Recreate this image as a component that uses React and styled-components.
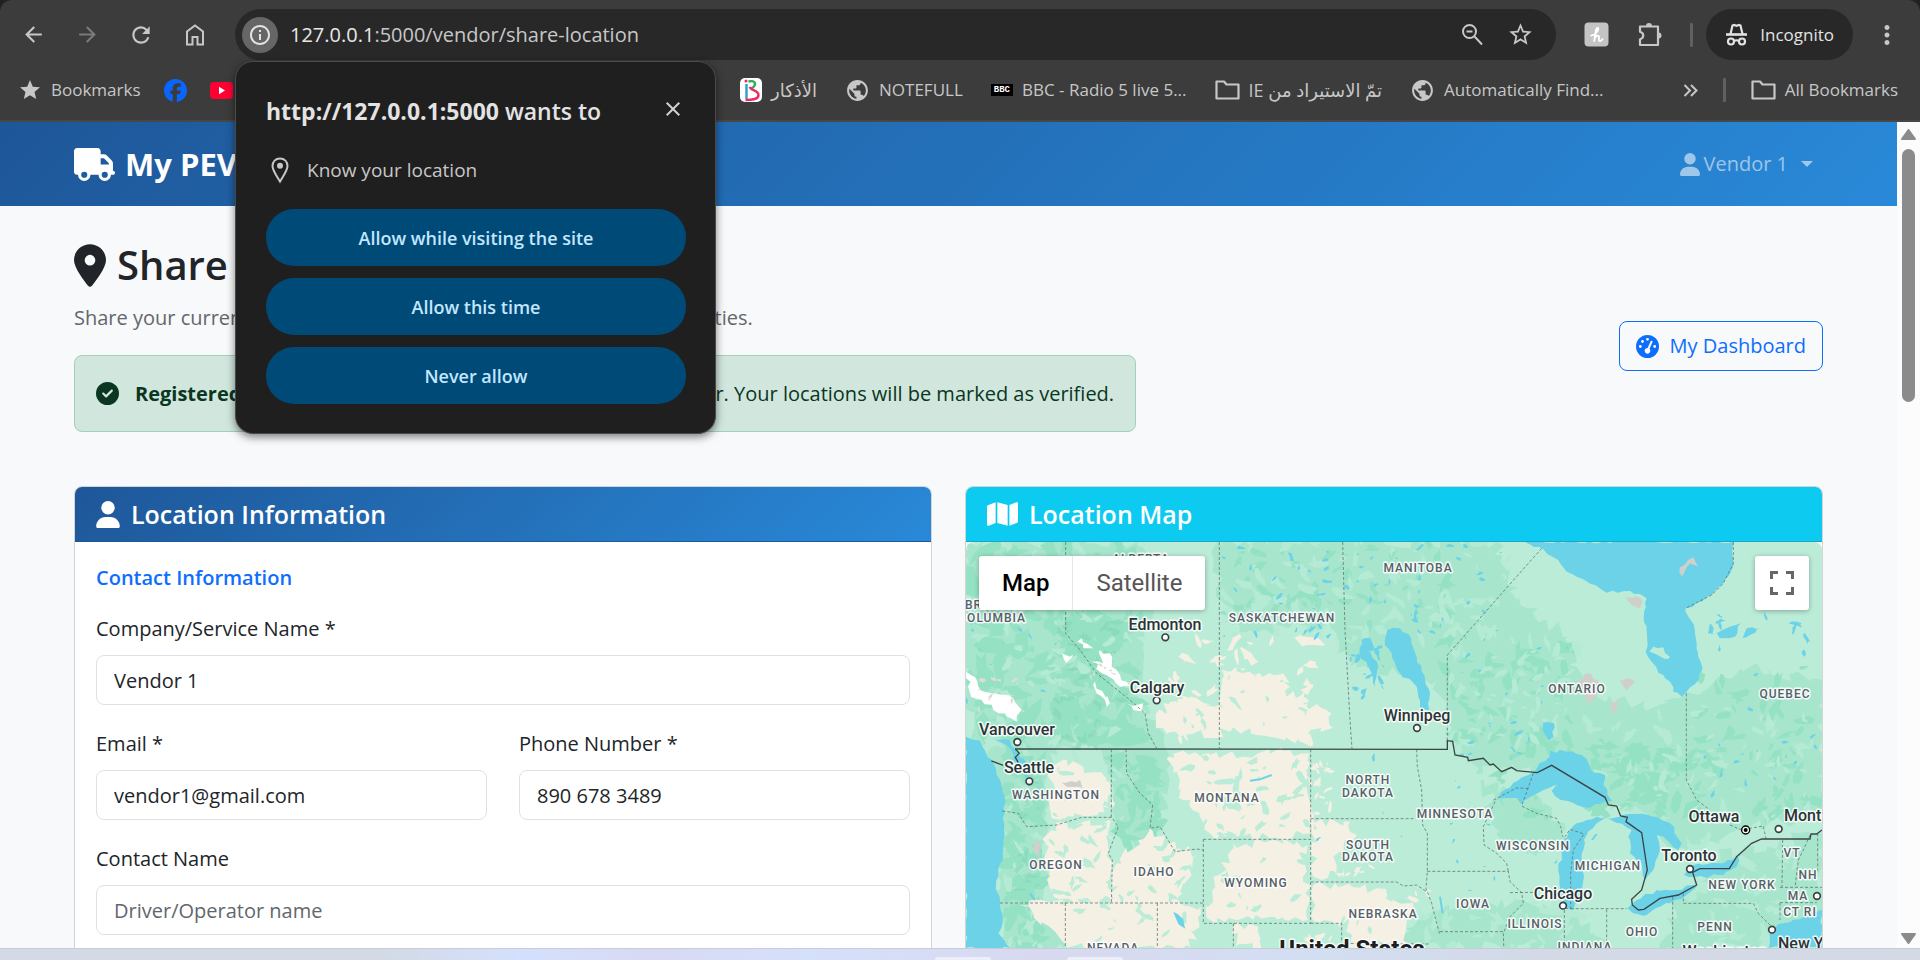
import React from "react";
import styled, { createGlobalStyle, css } from "styled-components";
import {
  FaTruck,
  FaUser,
  FaLocationDot,
  FaCircleCheck,
  FaMap,
  FaGaugeHigh,
  FaFacebook,
} from "react-icons/fa6";
import {
  MdArrowBack,
  MdArrowForward,
  MdRefresh,
  MdInfoOutline,
  MdStarBorder,
  MdStar,
  MdMoreVert,
  MdPublic,
  MdClose,
} from "react-icons/md";

const GlobalStyle = createGlobalStyle`
  *, *::before, *::after { box-sizing: border-box; }
  body {
    margin: 0;
    background: #202124;
    font-family: "Open Sans", "Noto Sans", "DejaVu Sans", sans-serif;
    font-size: 20px;
    line-height: 30px;
    color: #212529;
  }
  button, input { font: inherit; color: inherit; }
  svg { display: block; flex: none; }
`;

const BLUE = "linear-gradient(135deg, #1e5799 0%, #2989d8 100%)";

/* ---------- browser shell ---------- */

const Screen = styled.div`
  position: relative;
  display: flex;
  flex-direction: column;
  height: 100vh;
  overflow: hidden;
`;

const BrowserBar = styled.header`
  background: #3c3c3c;
  border-radius: 12px 12px 0 0;
  border-bottom: 2px solid #474747;
  color: #c7c7c7;
`;

const Toolbar = styled.div`
  display: flex;
  align-items: center;
  height: 60px;
  padding: 9px 6px 0;
`;

const IconButton = styled.button`
  display: flex;
  align-items: center;
  justify-content: center;
  width: 54px;
  height: 51px;
  padding: 0;
  border: 0;
  background: none;
  color: ${(p) => (p.$dim ? "#7b7b7b" : "#c7c7c7")};
`;

const AddressBar = styled.div`
  display: flex;
  flex: 1;
  align-items: center;
  height: 51px;
  margin: 0 13px;
  padding: 0 12px 0 7px;
  border-radius: 26px;
  background: #282828;
`;

const SiteInfo = styled.button`
  display: flex;
  align-items: center;
  justify-content: center;
  width: 36px;
  height: 36px;
  margin-right: 12px;
  padding: 0;
  border: 0;
  border-radius: 50%;
  background: #666;
  color: #e3e3e3;
`;

const Url = styled.div`
  flex: 1;
  color: #c7c7c7;
  span { color: #e8e8e8; }
`;

const AddressAction = styled(IconButton)`
  width: 48px;
`;

const Divider = styled.span`
  width: 3px;
  height: 24px;
  margin: 0 ${(p) => p.$gap || 13}px;
  border-radius: 1px;
  background: #606060;
`;

const Incognito = styled.button`
  display: flex;
  align-items: center;
  gap: 12px;
  height: 51px;
  margin-right: 7px;
  padding: 0 19px;
  border: 0;
  border-radius: 26px;
  background: #282828;
  color: #e3e3e3;
  font-size: 17px;
`;

const BookmarksBar = styled.nav`
  display: flex;
  align-items: center;
  height: 60px;
  padding: 0 22px 0 18px;
  font-size: 17px;
  white-space: nowrap;
`;

const BookmarkGroup = styled.div`
  display: flex;
  align-items: center;
  gap: ${(p) => p.$gap || 28}px;
  ${(p) => p.$first && css`width: 722px;`}
  ${(p) => p.$last && css`margin-left: auto; gap: 0;`}
`;

const Bookmark = styled.a`
  display: flex;
  align-items: center;
  gap: 9px;
  color: #c7c7c7;
  text-decoration: none;
  [dir="rtl"] { font-size: 18px; }
`;

const BbcMark = styled.span`
  padding: 0 3px;
  background: #000;
  color: #fff;
  font: bold 9px/12px "Liberation Mono", monospace;
`;

/* ---------- permission prompt ---------- */

const Prompt = styled.section`
  position: absolute;
  top: 61px;
  left: 235px;
  width: 481px;
  padding: 32px 29px 29px 30px;
  border: 1px solid #4a4a4a;
  border-radius: 18px;
  background: #1f1f1f;
  box-shadow: 0 3px 8px rgba(0, 0, 0, 0.5);
  color: #c7c7c7;
`;

const PromptHeader = styled.div`
  display: flex;
  justify-content: space-between;
  align-items: flex-start;
`;

const PromptTitle = styled.h2`
  margin: 0;
  font-size: 23px;
  line-height: 34px;
  font-weight: 600;
  color: #e3e3e3;
  strong { font-weight: 700; }
`;

const CloseButton = styled.button`
  display: flex;
  padding: 3px 1px;
  border: 0;
  background: none;
  color: #d0d0d0;
`;

const PromptRow = styled.div`
  display: flex;
  align-items: center;
  gap: 15px;
  padding: 27px 0 24px 2px;
  font-size: 19px;
`;

const PromptActions = styled.div`
  display: grid;
  gap: 12px;
`;

const PromptButton = styled.button`
  height: 57px;
  border: 0;
  border-radius: 28px;
  background: #004a77;
  color: #c2e7ff;
  font-size: 18px;
  font-weight: 600;
`;

/* ---------- web page ---------- */

const Viewport = styled.div`
  display: flex;
  flex: 1;
  min-height: 0;
`;

const Page = styled.div`
  flex: 1;
  min-width: 0;
  overflow: hidden;
  background: #f8f9fb;
`;

const Navbar = styled.nav`
  display: flex;
  align-items: center;
  justify-content: space-between;
  height: 84px;
  padding: 0 84px 0 74px;
  background: ${BLUE};
`;

const Brand = styled.a`
  display: flex;
  align-items: center;
  gap: 10px;
  color: #fff;
  font-size: 31px;
  font-weight: 700;
  text-decoration: none;
  svg { width: 41px; }
`;

const UserMenu = styled.button`
  display: flex;
  align-items: center;
  gap: 4px;
  padding: 0;
  border: 0;
  background: none;
  color: rgba(255, 255, 255, 0.55);
  font-size: 20px;
  svg { width: 20px; }
  &::after {
    content: "";
    margin-left: 9px;
    border: 6px solid transparent;
    border-top-color: currentColor;
    border-bottom: 0;
  }
`;

const Main = styled.main`
  padding: 30px 74px 0;
`;

const PageHeader = styled.div`
  display: flex;
  align-items: center;
  justify-content: space-between;
  margin-bottom: 30px;
`;

const Title = styled.h1`
  display: flex;
  align-items: center;
  gap: 11px;
  margin: 0 0 9px;
  font-size: 40px;
  line-height: 58px;
  font-weight: 600;
  svg { width: 32px; }
`;

const Lead = styled.p`
  margin: 0 0 22px;
  color: #62676c;
`;

const Notice = styled.div`
  display: flex;
  align-items: center;
  gap: 16px;
  height: 77px;
  margin-bottom: 24px;
  padding: 0 21px;
  border: 1px solid #a3cfbb;
  border-radius: 8px;
  background: #d1e7dd;
  color: #0a3622;
  white-space: nowrap;
`;

const DashboardLink = styled.a`
  display: flex;
  align-items: center;
  gap: 11px;
  padding: 9px 16px;
  border: 1px solid #0d6efd;
  border-radius: 8px;
  color: #0d6efd;
  text-decoration: none;
`;

const Columns = styled.div`
  display: grid;
  grid-template-columns: 1fr 1fr;
  gap: 33px;
`;

const Card = styled.section`
  overflow: hidden;
  min-width: 0;
  border: 1px solid #d3d4d6;
  border-radius: 8px;
  background: #fff;
`;

const CardHeader = styled.h2`
  display: flex;
  align-items: center;
  gap: 11px;
  height: 55px;
  margin: 0;
  padding: 0 21px;
  border-bottom: 1px solid ${(p) => (p.$info ? "#1aa6c4" : "#1b5a9b")};
  background: ${(p) => (p.$info ? "#0dcaf0" : BLUE)};
  color: #fff;
  font-size: 25px;
  font-weight: 600;
  svg { width: ${(p) => (p.$info ? 31 : 24)}px; }
`;

const Form = styled.form`
  display: grid;
  grid-template-columns: 1fr 1fr;
  column-gap: 32px;
  row-gap: 24px;
  padding: 21px 21px 80px;
`;

const SectionTitle = styled.h3`
  grid-column: 1 / -1;
  margin: 0 0 -3px;
  font-size: 20px;
  line-height: 30px;
  font-weight: 600;
  color: #0d6efd;
`;

const Field = styled.div`
  ${(p) => p.$wide && css`grid-column: 1 / -1;`}
  label { display: block; margin-bottom: 11px; }
`;

const TextInput = styled.input`
  display: block;
  width: 100%;
  height: 50px;
  padding: 0 17px;
  border: 1px solid #dee2e6;
  border-radius: 8px;
  background: #fff;
  outline: none;
  &::placeholder { color: #62676c; opacity: 1; }
`;

const ScrollTrack = styled.div`
  display: flex;
  flex-direction: column;
  align-items: center;
  justify-content: space-between;
  width: 23px;
  padding: 7px 0 4px;
  background: #fcfcfc;
`;

const ScrollTop = styled.div`
  display: grid;
  justify-items: center;
  gap: 9px;
`;

const ScrollThumb = styled.div`
  width: 13px;
  height: 253px;
  border-radius: 7px;
  background: #8b8b8b;
`;

const Taskbar = styled.footer`
  display: flex;
  justify-content: center;
  align-items: flex-end;
  gap: 76px;
  height: 12px;
  padding-left: 138px;
  border-top: 1px solid #c5ccda;
  background: linear-gradient(90deg, #d3dae6 0%, #d3dae6 20%, #d4e0fc 27%, #d8d9f4 34%, #d5e0fb 42%, #d8d9ef 54%, #d3def2 68%, #d3dae6 80%);
`;

const TaskTab = styled.span`
  width: 56px;
  height: 3px;
  border-radius: 3px 3px 0 0;
  background: #eceffa;
`;

/* ---------- map ---------- */

const MapFrame = styled.div`
  position: relative;
  overflow: hidden;
  border-radius: 8px 8px 0 0;
`;

const MapType = styled.div`
  position: absolute;
  top: 14px;
  left: 13px;
  display: flex;
  border-radius: 3px;
  background: #fff;
  box-shadow: 0 1px 5px rgba(0, 0, 0, 0.3);
  font-family: Roboto, sans-serif;
`;

const MapTypeButton = styled.button`
  height: 54px;
  padding: 0 23px;
  border: 0;
  background: none;
  color: ${(p) => (p.$active ? "#000" : "#565656")};
  font-size: 24px;
  font-weight: ${(p) => (p.$active ? 500 : 400)};
  & + & { border-left: 1px solid #e6e6e6; }
`;

const Fullscreen = styled.button`
  position: absolute;
  top: 14px;
  right: 13px;
  display: grid;
  place-items: center;
  width: 54px;
  height: 54px;
  padding: 0;
  border: 0;
  border-radius: 3px;
  background: #fff;
  box-shadow: 0 1px 5px rgba(0, 0, 0, 0.3);
  color: #666;
`;

const MapSvg = styled.svg`
  width: 100%;
  background: #bbecd8;
  text {
    font-family: Roboto, sans-serif;
    font-weight: 500;
    paint-order: stroke;
    stroke: #fff;
    stroke-width: 3px;
    stroke-linejoin: round;
    stroke-opacity: 0.85;
  }
  .city { font-size: 16px; fill: #2d3436; }
  .state { font-size: 12px; letter-spacing: 1px; fill: #566066; }
  .country { font-size: 24px; font-weight: 700; fill: #1c2022; }
`;

const random = (seed) => () => {
  seed = (seed * 1664525 + 1013904223) >>> 0;
  return seed / 4294967296;
};

const toPoints = (s) => s.trim().split(/\s+/).map((p) => p.split(",").map(Number));

/* Splits every edge and shifts the new points, so that an outline looks natural. */
const rough = (s, amount = 14, seed = 7) => {
  const rnd = random(seed);
  const pts = toPoints(s);
  let d = "";
  pts.forEach(([x, y], i) => {
    const [nx, ny] = pts[(i + 1) % pts.length];
    const n = Math.max(1, Math.round(Math.hypot(nx - x, ny - y) / 16));
    for (let k = 0; k < n; k++) {
      const j = k === 0 ? 0 : amount;
      const px = x + ((nx - x) * k) / n + (rnd() - 0.5) * j * 2;
      const py = y + ((ny - y) * k) / n + (rnd() - 0.5) * j * 2;
      d += `${d ? "L" : "M"}${Math.round(px)} ${Math.round(py)}`;
    }
  });
  return d + "Z";
};

/* Scatters count angular patches over the box x, y, w, h. */
const scatter = (boxes, seed) => {
  const rnd = random(seed);
  let d = "";
  boxes.forEach(([x, y, w, h, count, size]) => {
    for (let i = 0; i < count; i++) {
      const cx = x + rnd() * w;
      const cy = y + rnd() * h;
      const r = size * (0.35 + rnd() * 0.9);
      const tilt = rnd() * Math.PI;
      const n = 7 + Math.floor(rnd() * 4);
      for (let k = 0; k < n; k++) {
        const a = (k / n) * Math.PI * 2;
        const q = r * (0.35 + rnd() * 0.9);
        const ex = Math.cos(a) * q * 1.5;
        const ey = Math.sin(a) * q * 0.6;
        const px = cx + ex * Math.cos(tilt) - ey * Math.sin(tilt);
        const py = cy + ex * Math.sin(tilt) + ey * Math.cos(tilt);
        d += `${k ? "L" : "M"}${Math.round(px)} ${Math.round(py)}`;
      }
      d += "Z";
    }
  });
  return d;
};

const WOODLAND = [
  "48,186 340,186 560,186 640,330 600,420 560,470 590,560 560,640 640,760 660,900 610,1060 560,1130 510,1040 480,900 440,800 300,820 290,1060 280,1260 340,1404 150,1404 140,1230 165,1100 165,960 60,780 48,600",
  "800,186 1180,186 1500,186 1640,186 1700,360 1860,470 1880,560 1940,640 2080,680 2200,640 2400,560 2616,600 2616,1010 2400,1040 2200,1120 2040,1000 1900,960 1740,860 1600,880 1500,780 1460,600 1200,560 1140,440 900,450 820,420",
  "1600,900 1800,980 1850,1100 1760,1130 1640,1060",
  "2280,1130 2616,1060 2616,1300 2400,1404 2130,1404 2180,1260 2240,1220",
  "1300,1404 1420,1300 1720,1260 1880,1300 1960,1404",
];

const PRAIRIE = [
  "815,570 860,560 900,575 940,590 1000,580 1020,620 1010,650 1055,645 1070,595 1085,620 1060,665 1130,690 1150,745 1060,755 1090,790 960,770 900,745 840,755 690,770 620,745 640,670 690,645 740,655 795,680 812,640",
  "655,830 700,812 780,825 880,830 1000,812 1078,820 1080,1060 960,1075 900,1060 860,1070 780,1060 750,1000 700,960 690,900",
  "300,850 350,840 400,860 470,910 478,1000 400,1008 330,1020 300,990 310,910",
  "290,1045 400,1025 480,1020 476,1110 482,1265 330,1262 290,1200",
  "500,1150 600,1045 660,1090 740,1125 700,1210 690,1269 752,1280 720,1404 350,1404 300,1340 210,1275 490,1255",
  "850,1090 1040,1085 1070,1120 1075,1320 960,1310 800,1330 768,1300 790,1190 840,1150",
  "1090,1030 1200,1025 1220,1065 1150,1130 1180,1180 1090,1190",
  "1090,1215 1280,1225 1390,1290 1370,1390 1200,1404 1180,1330 1090,1322",
  "850,1340 925,1340 935,1404 850,1404",
  "870,505 905,520 925,545 885,540",
  "1030,475 1100,470 1125,495 1070,495",
  "685,530 715,525 740,552 700,550",
];

const WATER = [
  "1725,186 1780,208 1825,240 1850,275 1900,298 1935,315 1970,338 2020,334 2070,342 2090,355 2088,380 2081,412 2090,440 2092,480 2087,515 2105,545 2125,578 2160,605 2170,635 2195,650 2210,635 2235,612 2258,565 2245,530 2240,490 2232,435 2215,410 2207,385 2240,368 2285,345 2320,310 2345,270 2350,240 2350,186",
  "48,770 90,782 112,830 130,850 150,900 164,950 162,1050 158,1120 145,1190 138,1220 150,1260 158,1320 145,1360 180,1404 48,1404",
  "130,775 180,780 205,820 235,850 228,900 205,850 190,840 175,800",
  "1630,963 1690,908 1745,880 1768,850 1800,828 1800,812 1850,815 1895,825 1925,872 1965,885 1960,915 1985,962 1950,972 1900,982 1850,962 1815,948 1805,932 1822,915 1780,930 1740,952 1712,972 1702,955",
  "1840,1080 1880,1030 1940,1010 1970,1012 1940,1030 1910,1065 1895,1120 1902,1190 1895,1240 1870,1290 1850,1285 1830,1240 1825,1170 1835,1120",
  "1970,1012 2010,1010 2060,1002 2120,1010 2160,1030 2195,1090 2185,1110 2140,1070 2120,1065 2130,1110 2110,1170 2085,1200 2075,1150 2040,1120 2035,1070 2045,1050 2010,1030",
  "2032,1285 2060,1260 2120,1230 2180,1230 2230,1215 2240,1220 2210,1245 2130,1280 2090,1305 2050,1300",
  "2202,1185 2230,1155 2320,1150 2365,1130 2360,1160 2320,1185 2240,1190",
  "1312,450 1350,445 1375,462 1400,530 1440,640 1438,690 1410,680 1400,620 1350,580 1325,520 1305,495",
  "1235,480 1262,475 1275,510 1250,508 1285,560 1275,620 1255,560 1228,520",
  "2616,1290 2580,1308 2500,1330 2460,1350 2456,1404 2616,1404",
  "670,1295 700,1318 706,1346 685,1332",
  "1780,728 1812,730 1810,770 1795,782 1778,750",
  "2300,460 2340,440 2372,430 2355,470 2310,475",
  "2378,475 2390,445 2435,445 2400,465",
];

const ISLANDS = [
  "2098,515 2110,500 2140,502 2160,530 2155,537",
  "1935,1100 1960,1060 2000,1050 2030,1080 2035,1140 2020,1170",
];

const ROCK = [
  "2028,352 2060,348 2078,365 2070,384 2045,375",
  "2190,262 2215,240 2230,232 2245,258 2220,250 2196,290",
  "2010,602 2030,595 2055,605 2030,632",
  "1880,605 1905,580 1945,600 1940,650 1915,670",
  "1980,665 2010,655 2000,690 1985,705",
  "330,905 390,900 398,925 350,920",
  "255,1085 272,1085 270,1140 256,1120",
];

const SNOW = [
  "48,575 75,590 85,620 130,640 190,655 215,690 200,725 165,700 130,690 95,660 60,640",
  "382,485 395,475 430,505 400,505",
  "450,510 480,520 500,570 540,620 510,620 455,580 425,545 460,550",
  "335,520 368,525 350,548",
  "530,670 580,670 588,695 550,690",
  "435,605 480,670 470,680 440,640",
];

const DASHED = [
  "347,186 347,460 390,510 440,580 540,660 585,700 595,760 620,805",
  "808,186 808,806",
  "1178,186 1185,450 1200,720 1206,806",
  "1775,205 1492,525 1492,782",
  "2350,186 2350,250 2320,310 2285,345 2207,385",
  "2209,640 2209,900 2240,960 2280,990",
  "2340,1035 2370,1048 2400,1045 2440,1038 2448,1076",
  "484,808 484,1010 505,1040 475,1120 487,1140 484,1270",
  "157,993 205,1000 230,1040 320,1035 395,1012 487,1012",
  "528,808 530,880 570,940 608,975 600,1045 630,1040 675,1115 740,1107 760,1110",
  "150,1269 760,1269",
  "760,1078 1082,1078 1082,1330 760,1330 760,1078",
  "1082,808 1082,1078",
  "1082,1016 1390,1016",
  "1082,1206 1340,1206 1360,1218 1400,1215 1430,1235",
  "1082,1330 1175,1330 1175,1390 1440,1392",
  "346,1269 346,1420",
  "622,1269 622,1420",
  "850,1330 850,1420",
  "1400,808 1402,860 1415,930 1418,1035 1432,1060 1432,1175 1428,1225 1445,1270 1460,1330 1470,1365",
  "1432,1174 1675,1174 1680,1205 1715,1238 1720,1270 1680,1310 1660,1360 1662,1420",
  "1470,1355 1660,1355",
  "1635,965 1600,1040 1602,1095 1640,1120 1670,1150 1675,1174",
  "1750,880 1715,978 1760,1000 1820,1015 1832,1040 1838,1070",
  "1630,960 1700,924 1735,925",
  "1845,1285 1862,1286 1862,1180 1870,1110 1902,1062 1860,1048 1845,1070",
  "1680,1238 1750,1237",
  "1843,1290 1843,1420",
  "1970,1288 1970,1420",
  "1862,1286 2030,1286",
  "2168,1250 2168,1420",
  "2200,1240 2200,1270 2410,1270 2425,1300 2465,1340",
  "2498,1080 2496,1220",
  "2580,1065 2560,1110 2545,1140 2535,1222",
  "2490,1222 2616,1222",
  "2490,1268 2600,1268",
  "2490,1268 2490,1320",
  "2603,1060 2603,1180",
];

const BORDER =
  "195,807 1492,808 1492,782 1508,784 1515,825 1553,832 1555,842 1600,835 1620,855 1630,852 1655,875 1685,862 1700,872 1762,878 1805,856 1965,952 1975,975 2000,978 2012,1008 2032,1012 2028,1025 2075,1058 2092,1170 2075,1230 2045,1258 2047,1275 2065,1290 2082,1288 2130,1255 2185,1245 2240,1215 2228,1177 2250,1166 2338,1166 2360,1130 2405,1090 2435,1077 2580,1077 2583,1062 2600,1062 2616,1050";

const LABELS = [
  ["city", 646, 450, "Edmonton"],
  ["city", 620, 638, "Calgary"],
  ["city", 202, 764, "Vancouver"],
  ["city", 238, 880, "Seattle"],
  ["city", 1400, 722, "Winnipeg"],
  ["city", 1838, 1256, "Chicago"],
  ["city", 2218, 1144, "Toronto"],
  ["city", 2292, 1026, "Ottawa"],
  ["city", 2502, 1024, "Montreal", "start"],
  ["city", 2484, 1406, "New York", "start"],
  ["city", 2324, 1430, "Washington"],
  ["state", 574, 250, "ALBERTA"],
  ["state", 45, 386, "BRITISH", "start"],
  ["state", 228, 425, "COLUMBIA", "end"],
  ["state", 996, 425, "SASKATCHEWAN"],
  ["state", 1404, 275, "MANITOBA"],
  ["state", 1881, 640, "ONTARIO"],
  ["state", 2504, 655, "QUEBEC"],
  ["state", 318, 958, "WASHINGTON"],
  ["state", 318, 1168, "OREGON"],
  ["state", 612, 1188, "IDAHO"],
  ["state", 831, 967, "MONTANA"],
  ["state", 918, 1220, "WYOMING"],
  ["state", 1255, 913, "NORTH"],
  ["state", 1255, 950, "DAKOTA"],
  ["state", 1255, 1107, "SOUTH"],
  ["state", 1255, 1143, "DAKOTA"],
  ["state", 1516, 1013, "MINNESOTA"],
  ["state", 1298, 1313, "NEBRASKA"],
  ["state", 490, 1415, "NEVADA"],
  ["state", 1748, 1111, "WISCONSIN"],
  ["state", 1974, 1170, "MICHIGAN"],
  ["state", 1569, 1283, "IOWA"],
  ["state", 1755, 1344, "ILLINOIS"],
  ["state", 1906, 1413, "INDIANA"],
  ["state", 2075, 1368, "OHIO"],
  ["state", 2296, 1354, "PENN"],
  ["state", 2376, 1226, "NEW YORK"],
  ["state", 2526, 1131, "VT"],
  ["state", 2573, 1196, "NH"],
  ["state", 2543, 1261, "MA"],
  ["state", 2549, 1309, "CT RI"],
  ["country", 1206, 1431, "United States"],
];

const CITY_DOTS = [
  [646, 472], [620, 661], [202, 786], [238, 904], [1401, 744],
  [1839, 1277], [2220, 1167], [2486, 1047], [2601, 1248], [2466, 1349],
];

const mapX = (x) => Math.round((x - 48) / 3);
const mapY = (y) => Math.round((y - 186) / 3);

const Shapes = ({ list, amount, ...rest }) => (
  <g {...rest}>
    {list.map((s, i) => <path key={i} d={rough(s, amount, i + 3)} />)}
  </g>
);

const RegionMap = () => (
  <MapSvg viewBox="0 0 856 470" role="img" aria-label="Map of North America">
    <g transform="scale(0.33333) translate(-48 -186)">
      <Shapes list={WOODLAND} amount={20} fill="#a7e6cd" />
      <path
        fill="#94e2c3"
        d={scatter([
          [48, 186, 500, 600, 130, 34], [165, 800, 110, 600, 60, 30], [490, 830, 130, 250, 50, 26],
          [350, 400, 200, 380, 50, 34], [1480, 480, 400, 350, 60, 24], [1900, 800, 400, 200, 60, 28],
          [2250, 560, 366, 460, 50, 22], [820, 186, 750, 260, 50, 20], [1620, 780, 500, 250, 20, 20],
        ], 11)}
      />
      <path
        fill="#b5ead5"
        d={scatter([
          [48, 186, 500, 700, 60, 22], [820, 186, 860, 300, 80, 22], [1500, 480, 400, 340, 60, 18],
          [1900, 680, 700, 340, 80, 18], [2200, 1080, 400, 300, 40, 24], [1350, 1260, 560, 150, 30, 24],
          [165, 800, 100, 600, 14, 20],
        ], 23)}
      />
      <path fill="#7fd3b3" opacity="0.5" d={scatter([[300, 420, 230, 360, 40, 15], [200, 820, 70, 500, 24, 13]], 41)} />
      <Shapes list={PRAIRIE} amount={15} fill="#f4f0e4" />
      <path
        fill="#bbecd8"
        d={scatter([
          [640, 570, 440, 180, 32, 15], [690, 830, 390, 240, 42, 18], [300, 860, 180, 400, 28, 15],
          [380, 1100, 330, 300, 34, 14], [780, 1100, 290, 220, 14, 16], [1090, 1220, 280, 170, 8, 14],
        ], 5)}
      />
      <path
        fill="#f4f0e4"
        d={scatter([
          [620, 480, 500, 300, 30, 15], [1090, 830, 60, 180, 14, 12], [430, 860, 60, 140, 10, 12],
          [1160, 1130, 120, 60, 6, 12], [1380, 1230, 60, 60, 5, 12], [1060, 1340, 120, 50, 5, 14],
        ], 19)}
      />
      <path
        fill="#6cd2e8"
        d={scatter([
          [820, 190, 850, 280, 60, 9], [1480, 460, 400, 400, 26, 8], [2280, 400, 330, 130, 10, 13],
          [2240, 560, 370, 400, 16, 9], [48, 200, 290, 500, 20, 6], [1500, 900, 150, 350, 12, 5],
          [1100, 830, 280, 250, 6, 7], [1200, 500, 100, 160, 14, 10], [1780, 1090, 60, 60, 2, 5],
        ], 77)}
      />
      <Shapes list={WATER} amount={5} fill="#6cd2e8" />
      <Shapes list={ISLANDS} amount={5} fill="#bbecd8" />
      <Shapes list={ROCK} amount={6} fill="#cfd0cc" />
      <Shapes list={SNOW} amount={9} fill="#fff" />
      <path fill="#dfdcd6" d={scatter([[60, 590, 160, 120, 12, 9], [430, 530, 90, 70, 6, 8]], 9)} />
      <path
        d="M965 885L930 898L900 902M1470 1250L1478 1300M1940 1062L1926 1080M240 1240L255 1260"
        fill="none" stroke="#6cd2e8" strokeWidth="6"
      />
      {DASHED.map((s) => (
        <polyline key={s} points={s} fill="none" stroke="#5c706b" strokeOpacity="0.75" strokeWidth="3" strokeDasharray="9 6" />
      ))}
      <polyline points={BORDER} fill="none" stroke="#3b4547" strokeWidth="4" />
      <path d="M124 843L160 856M196 807L208 820L196 832L205 848" fill="none" stroke="#3b4547" strokeWidth="4" />
      {CITY_DOTS.map(([x, y]) => (
        <circle key={x} cx={x} cy={y} r="10" fill="#fff" stroke="#3b4043" strokeWidth="5" />
      ))}
      <circle cx="2387" cy="1050" r="12" fill="#fff" stroke="#000" strokeWidth="4" />
      <circle cx="2387" cy="1050" r="6" />
    </g>
    {LABELS.map(([kind, x, y, name, anchor]) => (
      <text key={name + y} className={kind} x={mapX(x)} y={mapY(y)} textAnchor={anchor || "middle"}>
        {name}
      </text>
    ))}
  </MapSvg>
);

/* ---------- drawn icons ---------- */

const HomeIcon = () => (
  <svg width="24" height="26" viewBox="0 0 24 26" fill="none" stroke="currentColor" strokeWidth="2">
    <path d="M4 22.500V9.500L12 3.500l8 6v13h-5.500v-7.500h-5v7.500z" />
  </svg>
);

const ZoomOutIcon = () => (
  <svg width="26" height="26" viewBox="0 0 26 26" fill="none" stroke="currentColor" strokeWidth="2">
    <circle cx="10.500" cy="9.500" r="6.500" />
    <path d="M15.500 14.500L23 22.500M7.500 9.500h6" />
  </svg>
);

const HoneyIcon = () => (
  <svg width="25" height="25" viewBox="0 0 25 25">
    <rect x="0.500" y="0.500" width="24" height="24" rx="4" fill="#c4c4c4" />
    <path
      d="M10.200 19L11.800 9C12.500 5 15 5.200 14 8C13 11 10 13 7.200 13.600M11 16C12.500 12.800 15.300 13 15 15.500C14.800 17 14.500 19 16 19C17 19 18 18.200 18.500 17.200"
      fill="none" stroke="#fff" strokeWidth="1.900" strokeLinecap="round" strokeLinejoin="round"
    />
  </svg>
);

const PuzzleIcon = () => (
  <svg width="28" height="28" viewBox="0 0 28 28">
    <path
      d="M4 5.500H22V24H4V18.200C8.300 17 8.300 12 4 10.800Z"
      fill="none" stroke="currentColor" strokeWidth="2.200" strokeLinejoin="round"
    />
    <path d="M10 5a3 3 0 0 1 6 0zM22.500 11.500a3 3 0 0 1 0 6z" fill="currentColor" />
  </svg>
);

const IncognitoIcon = () => (
  <svg width="23" height="24" viewBox="0 0 23 24" fill="none" stroke="currentColor" strokeWidth="2.200">
    <path d="M5.500 11L7.500 2.500L9 2l2.500 .8L14 2l1.500 .5L17.500 11" />
    <path d="M1 11.500h21" strokeWidth="2.600" />
    <circle cx="6" cy="18.500" r="3" />
    <circle cx="17" cy="18.500" r="3" />
    <path d="M9 18q2.500-1.500 5 0" />
  </svg>
);

const FolderIcon = () => (
  <svg width="25" height="20" viewBox="0 0 25 20" fill="none" stroke="currentColor" strokeWidth="2.200" strokeLinejoin="round">
    <path d="M1.500 1.500h7.500l2.500 3h12v14h-22z" />
  </svg>
);

const PinIcon = () => (
  <svg width="24" height="28" viewBox="0 0 24 28">
    <path
      d="M12 2.500C7.500 2.500 4.500 5.800 4.500 10c0 4.500 4 9.500 7.500 15.500c3.500-6 7.500-11 7.500-15.500c0-4.200-3-7.500-7.500-7.500z"
      fill="none" stroke="currentColor" strokeWidth="2"
    />
    <circle cx="12" cy="9.800" r="3" fill="currentColor" />
  </svg>
);

const YoutubeIcon = () => (
  <svg width="23" height="17" viewBox="0 0 23 17">
    <rect width="23" height="17" rx="4" fill="#ff0033" />
    <path d="M9 4.800v7.400l6-3.700z" fill="#fff" />
  </svg>
);

const AthkarIcon = () => (
  <svg width="22" height="24" viewBox="0 0 22 24" fill="none" strokeWidth="2.400">
    <rect width="22" height="24" rx="5" fill="#fff" />
    <path d="M6.500 6v15" stroke="#2b9fc9" />
    <path d="M8.500 3.500c8-2 8 4 3 7" stroke="#35a853" />
    <path d="M9.500 9c2 4 9 3 9 8s-8 5-13 5" stroke="#ee2a63" />
    <circle cx="6" cy="3" r="1.500" fill="#ee2a63" />
  </svg>
);

const ChevronsIcon = () => (
  <svg width="15" height="13" viewBox="0 0 15 13" fill="none" stroke="currentColor" strokeWidth="2">
    <path d="M1.500 1l5.500 5.500L1.500 12M8 1l5.500 5.500L8 12" />
  </svg>
);

const FullscreenIcon = () => (
  <svg width="24" height="24" viewBox="0 0 24 24" fill="none" stroke="currentColor" strokeWidth="3">
    <path d="M1.500 8V1.500H8M16 1.500h6.500V8M22.500 16v6.500H16M8 22.500H1.500V16" />
  </svg>
);

const ScrollArrow = ({ down }) => (
  <svg width="15" height="11" viewBox="0 0 15 11">
    <path d={down ? "M1 1h13L7.500 10z" : "M1 10h13L7.500 1z"} fill="#8b8b8b" stroke="#8b8b8b" strokeWidth="2" strokeLinejoin="round" />
  </svg>
);

/* ---------- app ---------- */

const TextField = ({ id, label, wide, ...rest }) => (
  <Field $wide={wide}>
    <label htmlFor={id}>{label}</label>
    <TextInput id={id} {...rest} />
  </Field>
);

export default function App() {
  return (
    <Screen>
      <GlobalStyle />
      <BrowserBar>
        <Toolbar>
          <IconButton aria-label="Back"><MdArrowBack size={25} /></IconButton>
          <IconButton aria-label="Forward" $dim><MdArrowForward size={25} /></IconButton>
          <IconButton aria-label="Reload"><MdRefresh size={26} /></IconButton>
          <IconButton aria-label="Home"><HomeIcon /></IconButton>
          <AddressBar>
            <SiteInfo aria-label="Site information"><MdInfoOutline size={24} /></SiteInfo>
            <Url><span>127.0.0.1</span>:5000/vendor/share-location</Url>
            <AddressAction aria-label="Zoom"><ZoomOutIcon /></AddressAction>
            <AddressAction aria-label="Bookmark this page"><MdStarBorder size={27} /></AddressAction>
          </AddressBar>
          <IconButton aria-label="Honey"><HoneyIcon /></IconButton>
          <IconButton aria-label="Extensions"><PuzzleIcon /></IconButton>
          <Divider />
          <Incognito><IncognitoIcon />Incognito</Incognito>
          <IconButton aria-label="Menu"><MdMoreVert size={30} /></IconButton>
        </Toolbar>
        <BookmarksBar>
          <BookmarkGroup $first $gap={23}>
            <Bookmark href="#"><MdStar size={24} />Bookmarks</Bookmark>
            <Bookmark href="#" aria-label="Facebook"><FaFacebook size={23} color="#0866ff" /></Bookmark>
            <Bookmark href="#" aria-label="YouTube"><YoutubeIcon /></Bookmark>
          </BookmarkGroup>
          <BookmarkGroup>
            <Bookmark href="#"><AthkarIcon /><span dir="rtl">الأذكار</span></Bookmark>
            <Bookmark href="#"><MdPublic size={25} />NOTEFULL</Bookmark>
            <Bookmark href="#"><BbcMark>BBC</BbcMark>BBC - Radio 5 live 5...</Bookmark>
            <Bookmark href="#"><FolderIcon /><span dir="rtl">تمّ الاستيراد من IE</span></Bookmark>
            <Bookmark href="#"><MdPublic size={25} />Automatically Find...</Bookmark>
          </BookmarkGroup>
          <BookmarkGroup $last>
            <ChevronsIcon />
            <Divider $gap={25} />
            <Bookmark href="#"><FolderIcon />All Bookmarks</Bookmark>
          </BookmarkGroup>
        </BookmarksBar>
      </BrowserBar>

      <Viewport>
        <Page>
          <Navbar>
            <Brand href="#"><FaTruck size={33} />My PEV</Brand>
            <UserMenu><FaUser size={23} />Vendor 1</UserMenu>
          </Navbar>
          <Main>
            <PageHeader>
              <div>
                <Title><FaLocationDot size={43} />Share Location</Title>
                <Lead>Share your current location to help customers find the available facilities.</Lead>
                <Notice>
                  <FaCircleCheck size={23} />
                  <span>
                    <strong>Registered Vendor:</strong> You are logged in as the registered vendor. Your locations will be marked as verified.
                  </span>
                </Notice>
              </div>
              <DashboardLink href="#"><FaGaugeHigh size={23} />My Dashboard</DashboardLink>
            </PageHeader>
            <Columns>
              <Card>
                <CardHeader><FaUser size={27} />Location Information</CardHeader>
                <Form>
                  <SectionTitle>Contact Information</SectionTitle>
                  <TextField wide id="company" label="Company/Service Name *" defaultValue="Vendor 1" />
                  <TextField id="email" type="email" label="Email *" defaultValue="vendor1@gmail.com" />
                  <TextField id="phone" type="tel" label="Phone Number *" defaultValue="890 678 3489" />
                  <TextField wide id="contact" label="Contact Name" placeholder="Driver/Operator name" />
                </Form>
              </Card>
              <Card>
                <CardHeader $info><FaMap size={28} />Location Map</CardHeader>
                <MapFrame>
                  <RegionMap />
                  <MapType>
                    <MapTypeButton $active>Map</MapTypeButton>
                    <MapTypeButton>Satellite</MapTypeButton>
                  </MapType>
                  <Fullscreen aria-label="Toggle fullscreen view"><FullscreenIcon /></Fullscreen>
                </MapFrame>
              </Card>
            </Columns>
          </Main>
        </Page>
        <ScrollTrack>
          <ScrollTop>
            <ScrollArrow />
            <ScrollThumb />
          </ScrollTop>
          <ScrollArrow down />
        </ScrollTrack>
      </Viewport>

      <Taskbar>
        <TaskTab />
        <TaskTab />
      </Taskbar>

      <Prompt role="dialog" aria-labelledby="prompt-title">
        <PromptHeader>
          <PromptTitle id="prompt-title"><strong>http://127.0.0.1:5000</strong> wants to</PromptTitle>
          <CloseButton aria-label="Close"><MdClose size={24} /></CloseButton>
        </PromptHeader>
        <PromptRow><PinIcon />Know your location</PromptRow>
        <PromptActions>
          <PromptButton>Allow while visiting the site</PromptButton>
          <PromptButton>Allow this time</PromptButton>
          <PromptButton>Never allow</PromptButton>
        </PromptActions>
      </Prompt>
    </Screen>
  );
}
